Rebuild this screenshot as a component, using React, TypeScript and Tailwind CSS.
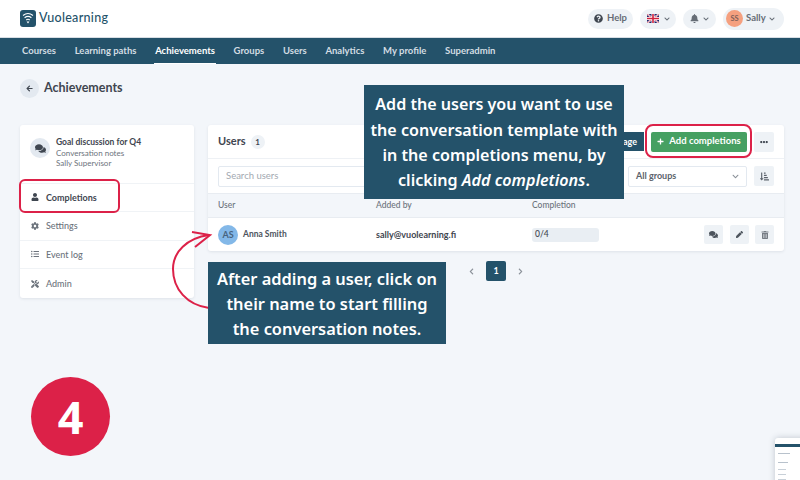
import React from 'react';
import {
  FaArrowLeft, FaBell, FaChevronDown, FaChevronLeft, FaChevronRight, FaCog, FaComments, FaEllipsisH,
  FaListUl, FaPen, FaPlus, FaQuestionCircle, FaSortAmountDownAlt, FaTools, FaTrashAlt, FaUser,
} from 'react-icons/fa';

const NAV = ['Courses', 'Learning paths', 'Achievements', 'Groups', 'Users', 'Analytics', 'My profile', 'Superadmin'];

const SIDE = [
  { label: 'Completions', icon: FaUser, active: true },
  { label: 'Settings', icon: FaCog },
  { label: 'Event log', icon: FaListUl },
  { label: 'Admin', icon: FaTools },
];

const Logo = () => (
  <svg width="16" height="17" viewBox="0 0 16 17">
    <rect x="0" y="0" width="16" height="17" rx="3" fill="#24526a" />
    <path d="M3 5.5c3-2.4 7-2.4 10 0M4.6 7.8c2-1.6 4.8-1.6 6.8 0M6.2 10c1-.8 2.6-.8 3.6 0" stroke="#fff" strokeWidth="1.1" fill="none" />
    <path d="M6.6 11.4h2.8L8 13.6z" fill="#fff" />
  </svg>
);

const Flag = () => (
  <svg width="12" height="9" viewBox="0 0 12 9">
    <rect width="12" height="9" fill="#23246b" />
    <path d="M0 0l12 9M12 0L0 9" stroke="#fff" strokeWidth="1.8" />
    <path d="M0 0l12 9M12 0L0 9" stroke="#d0213c" strokeWidth="0.6" />
    <path d="M6 0v9M0 4.5h12" stroke="#fff" strokeWidth="3" />
    <path d="M6 0v9M0 4.5h12" stroke="#d0213c" strokeWidth="1.6" />
  </svg>
);

const App: React.FC = () => {
  return (
    <div className="relative w-[800px] h-[480px] overflow-hidden bg-[#f3f6fa] font-['Lato',sans-serif] text-[#3f4650]">
      {/* Header */}
      <div className="flex h-[37px] items-center justify-between bg-white pl-[20px] pr-[16px]">
        <div className="flex items-center gap-[3px]">
          <Logo />
          <span className="text-[12.5px] font-medium tracking-[0.3px] text-[#24526a]">Vuolearning</span>
        </div>
        <div className="flex items-center gap-[7px] text-[9.5px] font-bold text-[#666d76]">
          <div className="flex h-[20px] w-[45px] items-center justify-center gap-[4px] rounded-full bg-[#eef2f6]">
            <FaQuestionCircle className="h-[9px] w-[9px] text-[#3f4650]" /> Help
          </div>
          <div className="flex h-[20px] w-[36px] items-center justify-center gap-[5px] rounded-full bg-[#eef2f6]">
            <Flag /> <FaChevronDown className="h-[6px] w-[6px]" />
          </div>
          <div className="flex h-[20px] w-[33px] items-center justify-center gap-[4px] rounded-full bg-[#eef2f6]">
            <FaBell className="h-[9px] w-[9px]" /> <FaChevronDown className="h-[6px] w-[6px]" />
          </div>
          <div className="flex h-[22px] w-[61px] items-center gap-[3px] rounded-full bg-[#eef2f6] pl-[3px]">
            <span className="flex h-[17px] w-[17px] items-center justify-center rounded-full bg-[#f5a07f] text-[7.5px] text-[#80605a]">SS</span>
            Sally <FaChevronDown className="h-[6px] w-[6px]" />
          </div>
        </div>
      </div>

      {/* Nav */}
      <div className="flex h-[27px] gap-[18.7px] border-t border-[#d8dee4] bg-[#24526a] pl-[22px] text-[9.5px] font-bold">
        {NAV.map(item => (
          <div
            key={item}
            className={`relative flex items-center ${item === 'Achievements' ? 'text-white' : 'text-[#d3dde3]'}`}
          >
            {item}
            {item === 'Achievements' && <span className="absolute -left-[1px] -right-[1px] bottom-0 h-[1.5px] bg-white" />}
          </div>
        ))}
      </div>

      {/* Title */}
      <div className="flex items-center gap-[5px] pl-[20px] pt-[15px]">
        <span className="flex h-[19px] w-[19px] items-center justify-center rounded-full bg-[#e3e9f0]">
          <FaArrowLeft className="h-[7px] w-[7px] text-[#3f4650]" />
        </span>
        <span className="text-[12.5px] font-bold">Achievements</span>
      </div>

      <div className="flex items-start gap-[14px] pl-[20px] pt-[27px]">
        {/* Sidebar */}
        <div className="w-[174px] rounded-[3px] bg-white shadow-[0_1px_3px_rgba(40,60,80,0.1)]">
          <div className="flex gap-[6px] px-[10px] pt-[13px] h-[58.5px] border-b border-[#f0f3f6]">
            <span className="flex h-[20px] w-[20px] shrink-0 items-center justify-center rounded-full bg-[#e3e9f0]">
              <FaComments className="h-[11px] w-[11px] text-[#3f4650]" />
            </span>
            <div className="leading-[9.5px]">
              <div className="text-[8.5px] font-bold leading-[9px] mb-[2px]">Goal discussion for Q4</div>
              <div className="text-[8px] text-[#6c737c]">Conversation notes</div>
              <div className="text-[8px] text-[#6c737c]">Sally Supervisor</div>
            </div>
          </div>
          {SIDE.map(({ label, icon: Icon, active }) => (
            <div
              key={label}
              className={`flex h-[28.6px] items-center gap-[7px] border-b border-[#f0f3f6] pl-[11px] text-[9px] last:border-b-0 ${active ? 'font-bold text-[#3f4650]' : 'font-medium text-[#6c737c]'}`}
            >
              <Icon className="h-[8px] w-[8px]" />
              {label}
            </div>
          ))}
        </div>

        {/* Users panel */}
        <div className="w-[576px]">
          <div className="rounded-[3px] bg-white shadow-[0_1px_3px_rgba(40,60,80,0.1)]">
            <div className="flex h-[34px] items-center justify-between border-b border-[#eef1f5] pl-[10px] pr-[10px]">
              <div className="flex items-center gap-[5px]">
                <span className="text-[11px] font-bold">Users</span>
                <span className="flex h-[14px] w-[14px] items-center justify-center rounded-full bg-[#eef2f6] text-[8px] font-bold">1</span>
              </div>
              <div className="flex items-center gap-[7px]">
                <div className="flex h-[19px] w-[100px] items-center justify-end bg-[#24526a] pr-[7px] text-[9px] font-bold text-white">Manage</div>
                <div className="flex h-[20px] w-[96px] items-center justify-center gap-[5px] rounded-[2px] bg-[#46a062] text-[9.5px] font-bold text-white">
                  <FaPlus className="h-[7px] w-[7px]" /> Add completions
                </div>
                <div className="flex h-[20px] w-[20px] items-center justify-center rounded-[2px] bg-[#eef2f6]">
                  <FaEllipsisH className="h-[8px] w-[8px]" />
                </div>
              </div>
            </div>
            <div className="flex h-[34px] items-center justify-between pl-[10px] pr-[10px]">
              <div className="flex h-[21px] w-[200px] items-center rounded-[2px] border border-[#e3e9f0] pl-[7px] text-[9.5px] text-[#a3a9b1]">Search users</div>
              <div className="flex items-center gap-[7px]">
                <div className="flex h-[21px] w-[119px] items-center justify-between rounded-[2px] border border-[#e3e9f0] px-[7px] text-[9px] font-bold text-[#5b626b]">
                  All groups
                  <FaChevronDown className="h-[7px] w-[7px] text-[#8b9199]" />
                </div>
                <div className="flex h-[20px] w-[20px] items-center justify-center rounded-[2px] bg-[#eef2f6]">
                  <FaSortAmountDownAlt className="h-[9px] w-[9px] text-[#5b626b]" />
                </div>
              </div>
            </div>
            <div className="grid h-[25px] grid-cols-[158px_156px_1fr] items-center border-y border-[#e8ecf1] bg-[#f3f6fa] pl-[10px] text-[8.5px] font-medium text-[#6c737c]">
              <span>User</span>
              <span>Added by</span>
              <span>Completion</span>
            </div>
            <div className="grid h-[33px] grid-cols-[158px_156px_1fr] items-center pl-[10px]">
              <div className="flex items-center gap-[5px]">
                <span className="flex h-[20px] w-[20px] items-center justify-center rounded-full bg-[#83b8e8] text-[9px] font-bold text-[#47637e]">AS</span>
                <span className="text-[8.5px] font-bold text-[#4d545d]">Anna Smith</span>
              </div>
              <span className="text-[9px] font-bold">sally@vuolearning.fi</span>
              <div className="flex items-center justify-between pr-[10px]">
                <div className="flex h-[14px] w-[67px] items-center rounded-[3px] bg-[#e9eef3] pl-[3px] text-[8.5px] font-medium">0/4</div>
                <div className="flex gap-[6.5px] text-[#4d545d]">
                  <span className="flex h-[19px] w-[19px] items-center justify-center rounded-[2px] bg-[#eef2f6]"><FaComments className="h-[9px] w-[9px]" /></span>
                  <span className="flex h-[19px] w-[19px] items-center justify-center rounded-[2px] bg-[#eef2f6]"><FaPen className="h-[7px] w-[7px]" /></span>
                  <span className="flex h-[19px] w-[19px] items-center justify-center rounded-[2px] bg-[#eef2f6]"><FaTrashAlt className="h-[8px] w-[8px] text-[#777d85]" /></span>
                </div>
              </div>
            </div>
          </div>

          {/* Pagination */}
          <div className="flex items-center gap-[11px] pl-[260px] pt-[10px] text-[#8b9199]">
            <FaChevronLeft className="h-[7px] w-[7px]" />
            <span className="flex h-[20px] w-[20px] items-center justify-center rounded-[2px] bg-[#24526a] text-[9px] font-bold text-white">1</span>
            <FaChevronRight className="h-[7px] w-[7px]" />
          </div>
        </div>
      </div>

      {/* Step number */}
      <div className="absolute left-[31px] top-[377px] flex h-[79px] w-[79px] items-center justify-center rounded-full bg-[#dc2148] font-['Open_Sans',sans-serif] text-[45px] font-bold text-white">4</div>

      {/* Highlight rings */}
      <div className="absolute left-[19px] top-[179px] h-[34px] w-[101px] rounded-[6px] border-2 border-[#dc2148]" />
      <div className="absolute left-[645px] top-[124px] h-[34px] w-[107px] rounded-[8px] border-2 border-[#dc2148]" />

      {/* Arrow */}
      <svg className="absolute left-[165px] top-[228px]" width="50" height="84" viewBox="0 0 50 84" fill="none" stroke="#dc2148" strokeWidth="2">
        <path d="M44 7C22 10 8 24 8 41c0 20 14 36 36 39" />
        <path d="M27 4L45 7L30 19" />
      </svg>

      {/* Callouts */}
      <div className="absolute left-[364px] top-[85px] flex h-[114px] w-[260px] flex-col items-center justify-center bg-[#24526a] pt-[2px] text-center font-['Noto_Sans',sans-serif] text-[16.1px] font-semibold leading-[25.4px] text-white">
        <div>Add the users you want to use</div>
        <div>the conversation template with</div>
        <div>in the completions menu, by</div>
        <div>clicking <em>Add completions</em>.</div>
      </div>
      <div className="absolute left-[208px] top-[262px] flex h-[82px] w-[238px] flex-col items-center justify-center bg-[#24526a] text-center font-['Noto_Sans',sans-serif] text-[16.4px] font-semibold leading-[25px] text-white">
        <div>After adding a user, click on</div>
        <div>their name to start filling</div>
        <div>the conversation notes.</div>
      </div>

      {/* Thumbnail */}
      <div className="absolute left-[775px] top-[438px] h-[60px] w-[40px] rounded-tl-[3px] bg-white shadow-[0_0_6px_rgba(40,60,80,0.25)]">
        <div className="mt-[6px] h-[3px] bg-[#24526a]" />
        <div className="ml-[3px] mt-[6px] h-[1px] w-[12px] bg-[#b8c2cc]" />
        <div className="ml-[3px] mt-[8px] h-[1px] w-[10px] bg-[#b8c2cc]" />
        <div className="ml-[3px] mt-[6px] h-[1px] w-[8px] bg-[#c8d0d8]" />
        <div className="ml-[3px] mt-[4px] h-[1px] w-[8px] bg-[#c8d0d8]" />
        <div className="ml-[3px] mt-[4px] h-[1px] w-[8px] bg-[#c8d0d8]" />
      </div>
    </div>
  );
};

export default App;
